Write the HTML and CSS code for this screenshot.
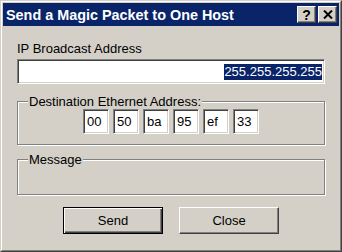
FILE: index.html
```html
<!DOCTYPE html>
<html lang="en">
<head>
    <meta charset="UTF-8">
    <title>Send a Magic Packet to One Host</title>
    <link rel="stylesheet" href="styles.css">
</head>
<body>
    <div class="window">
        <div class="frame">
            <div class="title-bar">
                <span class="title">Send a Magic Packet to One Host</span>
                <div class="title-buttons">
                    <button class="title-button" type="button">?</button>
                    <button class="title-button" type="button" aria-label="Close">
                        <svg width="10" height="9" viewBox="0 0 10 9">
                            <path d="M1 0.5 L9 8.5 M9 0.5 L1 8.5" stroke="#000" stroke-width="2"/>
                        </svg>
                    </button>
                </div>
            </div>
            <div class="dialog">
                <label class="field-label" for="broadcast">IP Broadcast Address</label>
                <div id="broadcast" class="text-box wide"><span class="selection">255.255.255.255</span></div>

                <fieldset class="group">
                    <legend>Destination Ethernet Address:</legend>
                    <div class="mac-row">
                        <input class="text-box octet" type="text" value="00">
                        <input class="text-box octet" type="text" value="50">
                        <input class="text-box octet" type="text" value="ba">
                        <input class="text-box octet" type="text" value="95">
                        <input class="text-box octet" type="text" value="ef">
                        <input class="text-box octet" type="text" value="33">
                    </div>
                </fieldset>

                <fieldset class="group">
                    <legend>Message</legend>
                    <div class="message-body"></div>
                </fieldset>

                <div class="actions">
                    <button class="push-button default" type="button">Send</button>
                    <button class="push-button" type="button">Close</button>
                </div>
            </div>
        </div>
    </div>
</body>
</html>
```

FILE: styles.css
```css
html, body {
    margin: 0;
}

body {
    width: 342px;
    height: 252px;
    background: #d4d0c8;
    font-family: "Liberation Sans", Arial, sans-serif;
    font-size: 13px;
    color: #000;
}

.window {
    box-sizing: border-box;
    width: 342px;
    height: 252px;
    border: 1px solid;
    border-color: #d4d0c8 #404040 #404040 #d4d0c8;
}

.frame {
    box-sizing: border-box;
    height: 100%;
    border: 1px solid;
    border-color: #fff #808080 #808080 #fff;
    padding: 1px;
    display: flex;
    flex-direction: column;
}

.title-bar {
    height: 23px;
    flex: none;
    background: #0a246a;
    display: flex;
    align-items: center;
    justify-content: space-between;
    padding-left: 3px;
}

.title {
    color: #fff;
    font-weight: bold;
    font-size: 14.4px;
}

.title-buttons {
    display: flex;
    gap: 2px;
    margin-right: 2px;
}

.title-button {
    box-sizing: border-box;
    width: 19px;
    height: 17px;
    padding: 0;
    background: #d4d0c8;
    border: 1px solid;
    border-color: #fff #404040 #404040 #fff;
    box-shadow: inset -1px -1px #808080;
    display: flex;
    align-items: center;
    justify-content: center;
    font: bold 14px "Liberation Sans", Arial, sans-serif;
    color: #000;
}

.dialog {
    display: flex;
    flex-direction: column;
    padding: 15px 14px 0;
}

.field-label {
    line-height: 15px;
}

.text-box {
    box-sizing: border-box;
    background: #fff;
    border: 1px solid;
    border-color: #808080 #fff #fff #808080;
    box-shadow: inset 1px 1px #404040, inset -1px -1px #d4d0c8;
    font: 13px "Liberation Sans", Arial, sans-serif;
    color: #000;
}

.wide {
    height: 25px;
    margin-top: 3px;
    display: flex;
    align-items: center;
    justify-content: flex-end;
    padding-right: 2px;
}

.selection {
    background: #0a246a;
    color: #fff;
    line-height: 16px;
}

.group {
    margin: 10px 0 0;
    padding: 0 0 10px;
    min-width: 0;
    border: 1px solid #808080;
    box-shadow: 1px 1px #fff, inset 1px 1px #fff;
}

.group legend {
    margin-left: 10px;
    padding: 0 1px;
    line-height: 15px;
    background: #d4d0c8;
}

.group + .group {
    margin-top: 7px;
}

.mac-row {
    display: flex;
    justify-content: center;
    gap: 4px;
}

.octet {
    width: 26px;
    height: 25px;
    padding: 0 0 0 3px;
    outline: none;
}

.message-body {
    height: 17px;
}

.actions {
    display: flex;
    justify-content: center;
    gap: 16px;
    margin-top: 12px;
}

.push-button {
    box-sizing: border-box;
    width: 100px;
    height: 27px;
    padding: 0;
    background: #d4d0c8;
    border: 1px solid;
    border-color: #fff #404040 #404040 #fff;
    box-shadow: inset -1px -1px #808080;
    font: 13px "Liberation Sans", Arial, sans-serif;
    color: #000;
}

.push-button.default {
    border-color: #000;
    box-shadow: inset 1px 1px #fff, inset -1px -1px #404040, inset -2px -2px #808080;
}
```
